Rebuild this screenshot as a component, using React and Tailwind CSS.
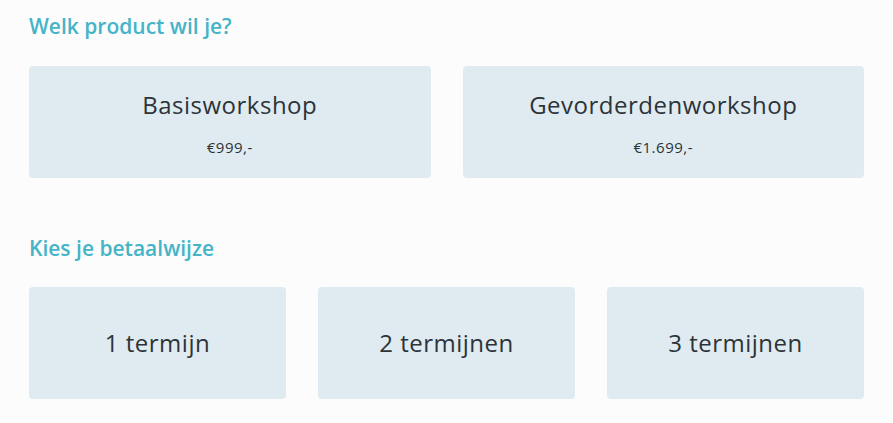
export default function App() {
  const font = { fontFamily: '"Open Sans", "Noto Sans", sans-serif' };
  return (
    <div className="min-h-screen bg-[#fcfcfc] px-[29px] pt-3" style={font}>
      <h2 className="text-[21px] leading-7 font-semibold text-[#45b4c8] mb-[26px]">Welk product wil je?</h2>
      <div className="grid grid-cols-2 gap-8">
        <button className="h-[112px] rounded bg-[#dfebf1] flex flex-col items-center pt-[23px] text-[#2d3338] tracking-[0.5px]">
          <span className="text-[24px] leading-8 font-medium">Basisworkshop</span>
          <span className="text-[15px] leading-5 mt-[16px]">€999,-</span>
        </button>
        <button className="h-[112px] rounded bg-[#dfebf1] flex flex-col items-center pt-[23px] text-[#2d3338] tracking-[0.5px]">
          <span className="text-[24px] leading-8 font-medium">Gevorderdenworkshop</span>
          <span className="text-[15px] leading-5 mt-[16px]">€1.699,-</span>
        </button>
      </div>
      <h2 className="text-[21px] leading-7 font-semibold text-[#45b4c8] mt-[56px] mb-[25px]">Kies je betaalwijze</h2>
      <div className="grid grid-cols-3 gap-8">
        {["1 termijn", "2 termijnen", "3 termijnen"].map((t) => (
          <button key={t} className="h-[112px] rounded bg-[#dfebf1] flex items-center justify-center text-[#2d3338] text-[24px] font-medium tracking-[0.5px]">
            {t}
          </button>
        ))}
      </div>
    </div>
  );
}
